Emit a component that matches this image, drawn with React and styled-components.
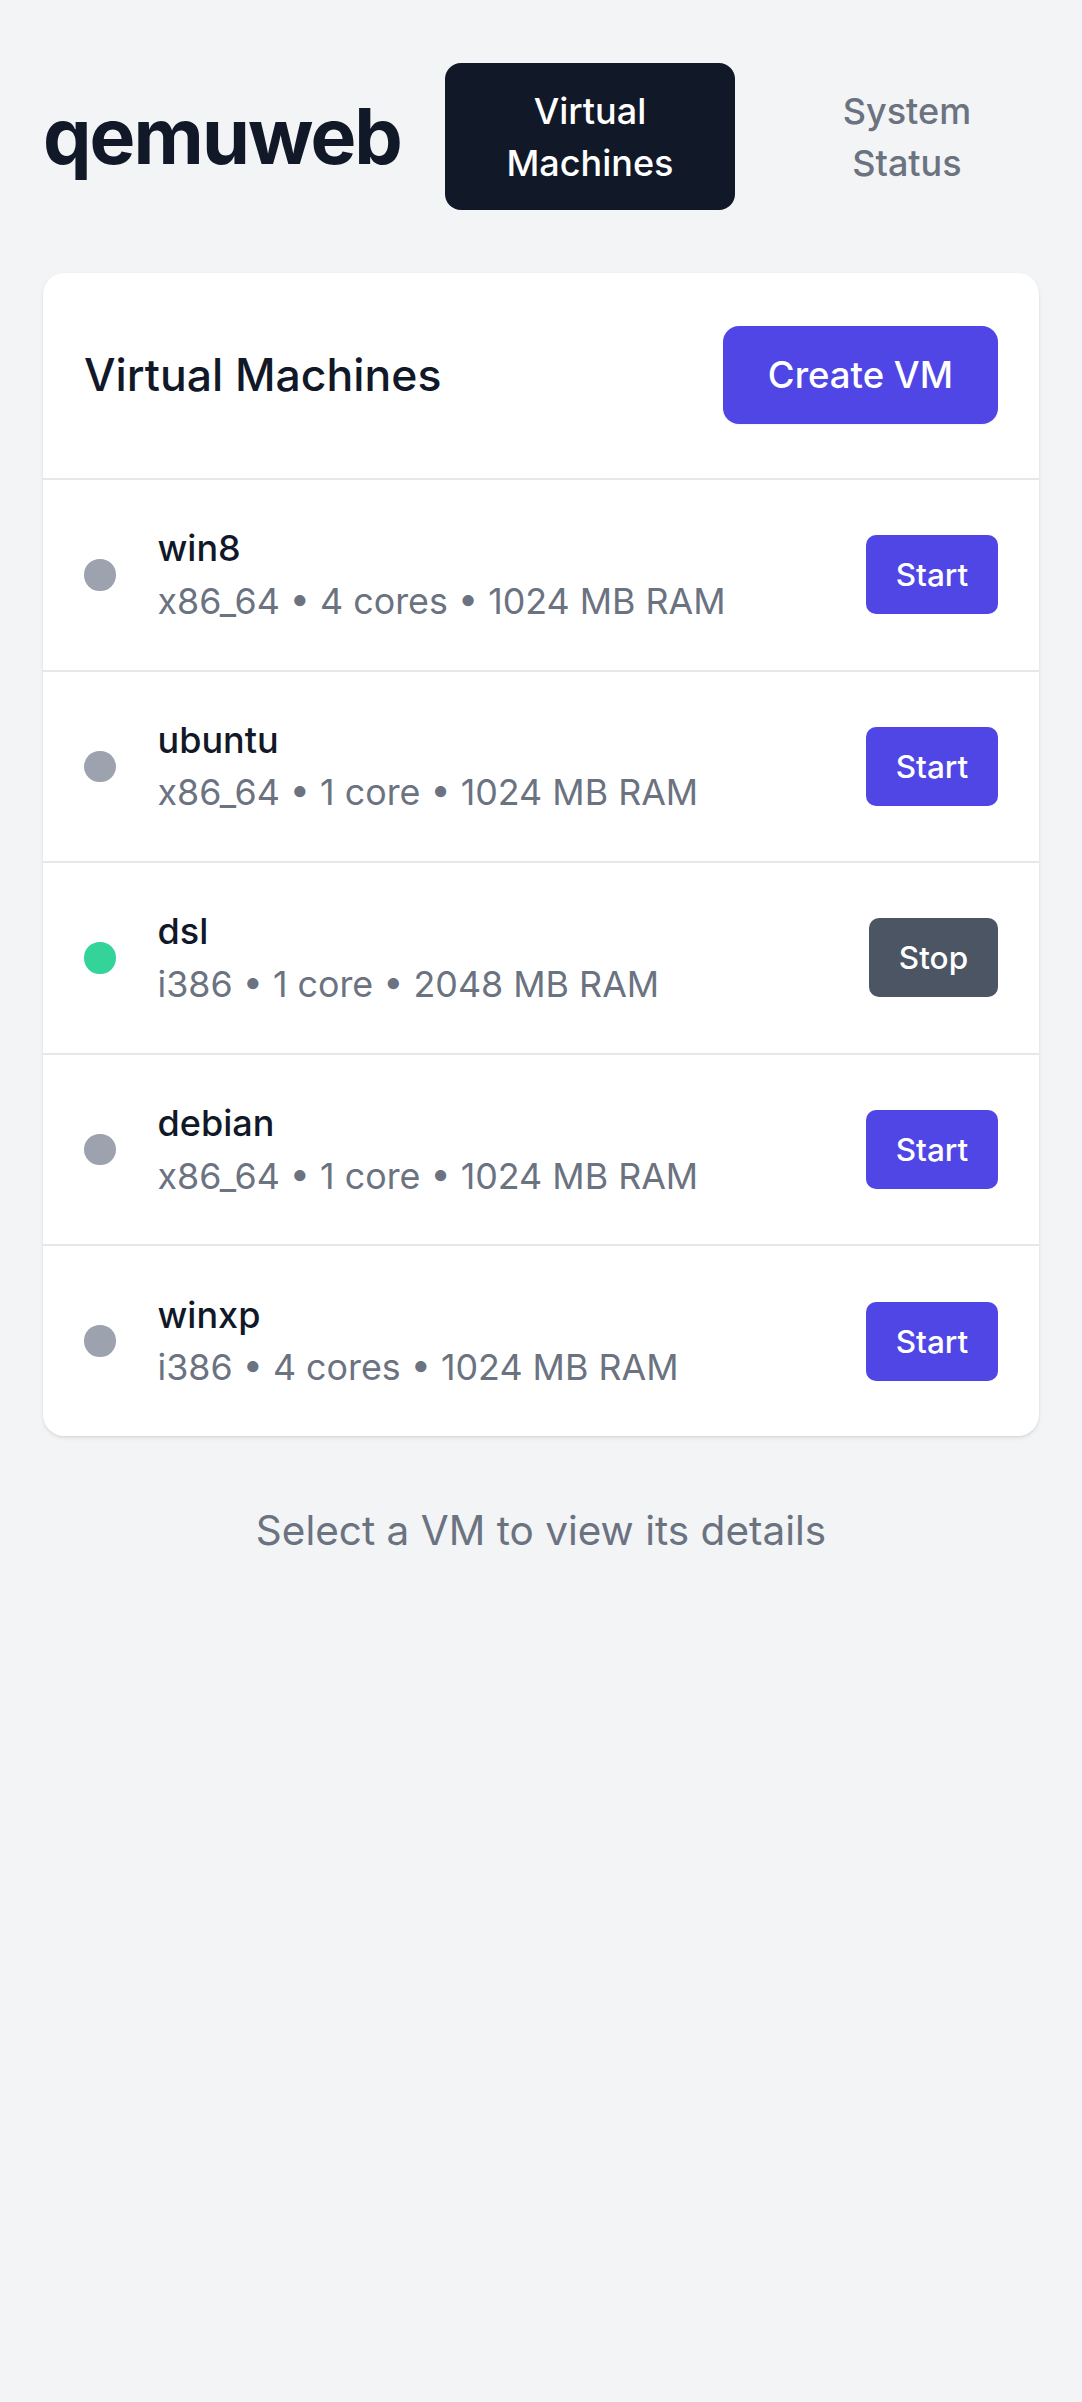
import React from "react";
import styled, { createGlobalStyle } from "styled-components";

const GlobalStyle = createGlobalStyle`
  body {
    margin: 0;
    background: #f3f4f6;
    font-family: Inter, "Noto Sans", "Liberation Sans", sans-serif;
    color: #111827;
  }
  * { box-sizing: border-box; }
`;

const Page = styled.div`
  min-height: 100vh;
  background: #f3f4f6;
`;

const Header = styled.header`
  display: flex;
  align-items: center;
  padding: 63px 43px 63px;
  gap: 44px;
`;

const Logo = styled.h1`
  margin: 0;
  font-size: 77px;
  font-weight: 700;
  line-height: 1;
  letter-spacing: -0.025em;
  color: #111827;
`;

const Nav = styled.nav`
  display: flex;
  gap: 27px;
`;

const Tab = styled.button`
  width: 290px;
  height: 147px;
  padding: 0 42px;
  border: none;
  border-radius: 16px;
  font-family: inherit;
  font-size: 36px;
  font-weight: 500;
  line-height: 52px;
  background: ${(p) => (p.$active ? "#111827" : "transparent")};
  color: ${(p) => (p.$active ? "#ffffff" : "#6b7280")};
`;

const Card = styled.section`
  margin: 0 43px;
  background: #ffffff;
  border-radius: 21px;
  box-shadow: 0 2px 4px rgba(0, 0, 0, 0.08), 0 1px 2px rgba(0, 0, 0, 0.06);
  overflow: hidden;
`;

const CardHeader = styled.div`
  display: flex;
  align-items: center;
  justify-content: space-between;
  padding: 53px 41px 54px;
  border-bottom: 2px solid #e5e7eb;
`;

const Title = styled.h2`
  margin: 0;
  font-size: 44.5px;
  font-weight: 500;
  color: #111827;
`;

const PrimaryButton = styled.button`
  border: none;
  border-radius: 16px;
  background: #4f46e5;
  color: #ffffff;
  font-family: inherit;
  font-size: 36.5px;
  font-weight: 500;
  line-height: 52px;
  padding: 23px 45px;
  box-shadow: 0 1px 2px rgba(0, 0, 0, 0.05);
`;

const List = styled.ul`
  list-style: none;
  margin: 0;
  padding: 0;
`;

const Row = styled.li`
  display: flex;
  align-items: center;
  padding: 42.3px 41px;
  & + & {
    border-top: 2px solid #e5e7eb;
  }
`;

const Dot = styled.span`
  width: 31.5px;
  height: 31.5px;
  border-radius: 50%;
  flex-shrink: 0;
  margin-right: 42px;
  background: ${(p) => (p.$running ? "#34d399" : "#9ca3af")};
`;

const Info = styled.div`
  flex: 1;
  min-width: 0;
`;

const Name = styled.div`
  font-size: 36px;
  font-weight: 500;
  line-height: 52.5px;
  color: #111827;
`;

const Details = styled.div`
  font-size: 35.8px;
  line-height: 52.5px;
  color: #6b7280;
`;

const ActionButton = styled.button`
  height: 79px;
  width: ${(p) => (p.$stop ? 129 : 132)}px;
  padding: 0;
  border: none;
  border-radius: 10px;
  font-family: inherit;
  font-size: 31.5px;
  font-weight: 500;
  color: #ffffff;
  background: ${(p) => (p.$stop ? "#4b5563" : "#4f46e5")};
`;

const Hint = styled.p`
  margin: 0;
  padding: 63px 43px;
  text-align: center;
  font-size: 40.5px;
  line-height: 63px;
  color: #6b7280;
`;

const vms = [
  { name: "win8", arch: "x86_64", cores: 4, ram: 1024, running: false },
  { name: "ubuntu", arch: "x86_64", cores: 1, ram: 1024, running: false },
  { name: "dsl", arch: "i386", cores: 1, ram: 2048, running: true },
  { name: "debian", arch: "x86_64", cores: 1, ram: 1024, running: false },
  { name: "winxp", arch: "i386", cores: 4, ram: 1024, running: false },
];

export default function App() {
  return (
    <Page>
      <GlobalStyle />
      <Header>
        <Logo>qemuweb</Logo>
        <Nav>
          <Tab $active>Virtual Machines</Tab>
          <Tab>System Status</Tab>
        </Nav>
      </Header>

      <Card>
        <CardHeader>
          <Title>Virtual Machines</Title>
          <PrimaryButton>Create VM</PrimaryButton>
        </CardHeader>
        <List>
          {vms.map((vm) => (
            <Row key={vm.name}>
              <Dot $running={vm.running} />
              <Info>
                <Name>{vm.name}</Name>
                <Details>
                  {vm.arch} • {vm.cores} {vm.cores === 1 ? "core" : "cores"} •{" "}
                  {vm.ram} MB RAM
                </Details>
              </Info>
              <ActionButton $stop={vm.running}>
                {vm.running ? "Stop" : "Start"}
              </ActionButton>
            </Row>
          ))}
        </List>
      </Card>

      <Hint>Select a VM to view its details</Hint>
    </Page>
  );
}
